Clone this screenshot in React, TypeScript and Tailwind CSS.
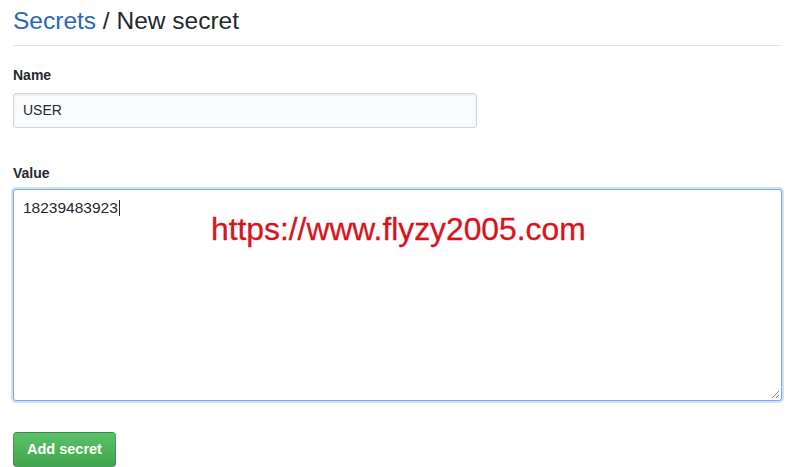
import React from "react";

export default function App() {
  return (
    <div
      className="min-h-[467px] w-[800px] bg-white text-[#24292e]"
      style={{ fontFamily: '"Liberation Sans", Arial, sans-serif' }}
    >
      <div className="ml-[13px] w-[769px]">
        <div className="border-b border-[#e1e4e8] pb-[8px] pt-[5px]">
          <h1 className="text-[24.5px] font-normal leading-[32px]">
            <span className="text-[#2a66b8]">Secrets</span>
            <span> / New secret</span>
          </h1>
        </div>

        <div className="mt-[19px] text-[14px] font-bold leading-[20px]">Name</div>
        <div className="mt-[8px] flex h-[35px] w-[464px] items-center rounded-[3px] border border-[#d1d5da] bg-[#fafbfc] px-[9px] text-[14px] shadow-[inset_0_1px_2px_rgba(27,31,35,0.075)]">
          USER
        </div>

        <div className="mt-[35px] text-[14px] font-bold leading-[20px]">Value</div>
        <div className="relative mt-[6px] h-[212px] w-full rounded-[3px] border border-[#7ea6e4] bg-white px-[9px] py-[7px] text-[15.5px] leading-[20px] shadow-[0_0_0_2px_rgba(120,165,235,0.35)]">
          <span>18239483923</span>
          <span className="ml-[1px] inline-block h-[16px] w-[1px] translate-y-[3px] bg-[#24292e]" />
          <div className="absolute left-[197px] top-[24px] text-[31.8px] leading-none text-[#d7141c] [-webkit-text-stroke:0.3px_#d7141c]">
            https://www.flyzy2005.com
          </div>
          <svg
            className="absolute bottom-[1px] right-[1px]"
            width="9"
            height="9"
            viewBox="0 0 9 9"
          >
            <line x1="1" y1="8" x2="8" y2="1" stroke="#8a8a8a" strokeWidth="1" />
            <line x1="5" y1="8" x2="8" y2="5" stroke="#8a8a8a" strokeWidth="1" />
          </svg>
        </div>

        <button className="mt-[31px] flex h-[35px] items-center rounded-[4px] border border-[rgba(27,31,35,0.2)] bg-gradient-to-b from-[#5cc26a] to-[#3fa64c] px-[13px] text-[14.5px] font-bold text-white">
          Add secret
        </button>
      </div>
    </div>
  );
}
